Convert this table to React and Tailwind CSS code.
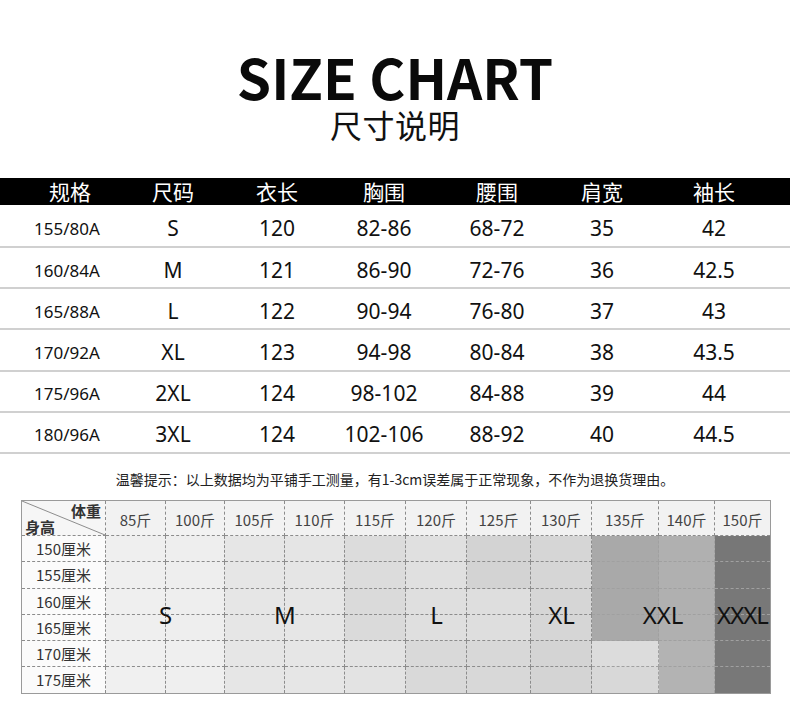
import React from "react";

const cjk = { fontFamily: '"Noto Sans CJK SC", "Noto Sans", sans-serif' };
const latin = { fontFamily: '"Noto Sans", "Noto Sans CJK SC", sans-serif' };

const headers = ["规格", "尺码", "衣长", "胸围", "腰围", "肩宽", "袖长"];
const rows = [
  ["155/80A", "S", "120", "82-86", "68-72", "35", "42"],
  ["160/84A", "M", "121", "86-90", "72-76", "36", "42.5"],
  ["165/88A", "L", "122", "90-94", "76-80", "37", "43"],
  ["170/92A", "XL", "123", "94-98", "80-84", "38", "43.5"],
  ["175/96A", "2XL", "124", "98-102", "84-88", "39", "44"],
  ["180/96A", "3XL", "124", "102-106", "88-92", "40", "44.5"],
];

const weights = ["85斤", "100斤", "105斤", "110斤", "115斤", "120斤", "125斤", "130斤", "135斤", "140斤", "150斤"];
const heights = ["150厘米", "155厘米", "160厘米", "165厘米", "170厘米", "175厘米"];

const shades = [
  ["bg-[#efefef]", "bg-[#eeeeee]", "bg-[#e6e6e6]", "bg-[#e5e5e5]", "bg-[#dcdcdc]", "bg-[#e0e0e0]", "bg-[#d3d3d3]", "bg-[#d6d6d6]", "bg-[#a9a9a9]", "bg-[#b0b0b0]", "bg-[#777777]"],
  ["bg-[#efefef]", "bg-[#eeeeee]", "bg-[#e6e6e6]", "bg-[#e5e5e5]", "bg-[#dcdcdc]", "bg-[#e0e0e0]", "bg-[#d3d3d3]", "bg-[#d6d6d6]", "bg-[#a9a9a9]", "bg-[#b0b0b0]", "bg-[#777777]"],
  ["bg-[#efefef]", "bg-[#eeeeee]", "bg-[#e6e6e6]", "bg-[#e6e6e6]", "bg-[#dadada]", "bg-[#dfdfdf]", "bg-[#dedede]", "bg-[#d6d6d6]", "bg-[#a9a9a9]", "bg-[#b0b0b0]", "bg-[#787878]"],
  ["bg-[#efefef]", "bg-[#eeeeee]", "bg-[#e6e6e6]", "bg-[#e6e6e6]", "bg-[#dadada]", "bg-[#dfdfdf]", "bg-[#dedede]", "bg-[#d6d6d6]", "bg-[#a9a9a9]", "bg-[#b0b0b0]", "bg-[#787878]"],
  ["bg-[#f0f0f0]", "bg-[#efefef]", "bg-[#e6e6e6]", "bg-[#e6e6e6]", "bg-[#e3e3e3]", "bg-[#d9d9d9]", "bg-[#d8d8d8]", "bg-[#d4d4d4]", "bg-[#dcdcdc]", "bg-[#b3b3b3]", "bg-[#787878]"],
  ["bg-[#f0f0f0]", "bg-[#efefef]", "bg-[#e6e6e6]", "bg-[#e6e6e6]", "bg-[#e3e3e3]", "bg-[#d9d9d9]", "bg-[#d8d8d8]", "bg-[#d4d4d4]", "bg-[#d8d8d8]", "bg-[#b3b3b3]", "bg-[#787878]"],
];

const tableCols = "grid grid-cols-[104px_102px_106px_108px_118px_92px_132px] pl-[18px]";
const gridTpl =
  "grid grid-cols-[84px_60px_59px_60px_60px_61px_61px_64px_61px_67px_56px_55px] grid-rows-[35px_26px_27px_26px_26px_26px_26px]";

function Cell({ last, lastRow, className = "", children, dark }) {
  return (
    <div
      className={
        "flex items-center justify-center border-dashed " +
        (dark ? "border-[#a0a0a0] " : "border-[#8c8c8c] ") +
        (last ? "" : "border-r ") +
        (lastRow ? "" : "border-b ") +
        className
      }
    >
      {children}
    </div>
  );
}

export default function App() {
  return (
    <div className="w-[790px] h-[708px] bg-white overflow-hidden">
      {/* Title */}
      <div className="h-[178px] flex flex-col items-center pt-[49px]">
        <div className="text-[55px] font-bold leading-none text-[#0a0a0a]" style={cjk}>
          SIZE CHART
        </div>
        <div className="text-[32px] leading-none text-[#111] mt-[4px] tracking-[0.5px]" style={cjk}>
          尺寸说明
        </div>
      </div>

      {/* Table header */}
      <div className={"bg-black h-[27px] " + tableCols}>
        {headers.map((h) => (
          <div key={h} className="flex items-center justify-center text-white text-[21px] leading-none" style={cjk}>
            {h}
          </div>
        ))}
      </div>

      {/* Table rows */}
      <div>
        {rows.map((r, i) => (
          <div key={i} className={(i === 0 ? "h-[43px] " : "h-[41.2px] ") + "border-b-2 border-[#d0d0d0] " + tableCols}>
            {r.map((v, j) => (
              <div
                key={j}
                className={
                  "flex items-center justify-center pt-[5px] leading-none text-[#111] " +
                  (j === 0 ? "text-[17px] pr-[6px]" : "text-[21px]")
                }
                style={latin}
              >
                {v}
              </div>
            ))}
          </div>
        ))}
      </div>

      {/* Note */}
      <div className="h-[46px] flex items-center justify-center pt-[4px]">
        <div className="text-[14px] leading-none text-[#222]" style={cjk}>
          温馨提示：以上数据均为平铺手工测量，有1-3cm误差属于正常现象，不作为退换货理由。
        </div>
      </div>

      {/* Height/weight grid */}
      <div className="ml-[21px] w-fit relative border border-[#9a9a9a]">
        <div className={gridTpl}>
          {/* corner */}
          <div className="relative bg-[#f6f6f6] border-r border-b border-dashed border-[#8c8c8c]" style={cjk}>
            <svg className="absolute inset-0 w-full h-full" viewBox="0 0 84 35" preserveAspectRatio="none">
              <line x1="0" y1="0" x2="84" y2="35" stroke="#8a8a8a" strokeWidth="1" />
            </svg>
            <span className="absolute right-[4px] top-[2px] text-[15px] font-bold leading-none text-[#333]">体重</span>
            <span className="absolute left-[3px] bottom-[1px] text-[15px] font-bold leading-none text-[#333]">身高</span>
          </div>
          {weights.map((w, j) => (
            <Cell key={w} last={j === weights.length - 1} className="bg-[#f2f2f2] text-[15px] text-[#444] leading-none pt-[3px]">
              <span style={cjk}>{w}</span>
            </Cell>
          ))}
          {heights.map((h, i) => (
            <React.Fragment key={h}>
              <Cell lastRow={i === heights.length - 1} className="bg-[#fbfbfb] text-[15px] text-[#333] leading-none">
                <span style={cjk}>{h}</span>
              </Cell>
              {shades[i].map((s, j) => (
                <Cell
                  key={j}
                  last={j === 10}
                  lastRow={i === heights.length - 1}
                  dark={j >= 8}
                  className={s}
                />
              ))}
            </React.Fragment>
          ))}
        </div>

        {/* size labels overlay */}
        <div className={"absolute inset-0 pointer-events-none " + gridTpl} style={latin}>
          <div className="col-start-2 col-span-2 row-start-4 row-span-2 flex items-center justify-center text-[24px] text-[#111] leading-none">S</div>
          <div className="col-start-4 col-span-2 row-start-4 row-span-2 flex items-center justify-center text-[24px] text-[#111] leading-none">M</div>
          <div className="col-start-7 col-span-1 row-start-4 row-span-2 flex items-center justify-center text-[24px] text-[#111] leading-none">L</div>
          <div className="col-start-9 col-span-1 row-start-4 row-span-2 flex items-center justify-center text-[24px] text-[#111] leading-none">XL</div>
          <div className="col-start-10 col-span-2 row-start-4 row-span-2 flex items-center justify-center pl-[19px] text-[24px] text-[#111] leading-none">XXL</div>
          <div className="col-start-12 col-span-1 row-start-4 row-span-2 flex items-center justify-center text-[24px] text-[#111] leading-none tracking-[-1px]">XXXL</div>
        </div>
      </div>
    </div>
  );
}
